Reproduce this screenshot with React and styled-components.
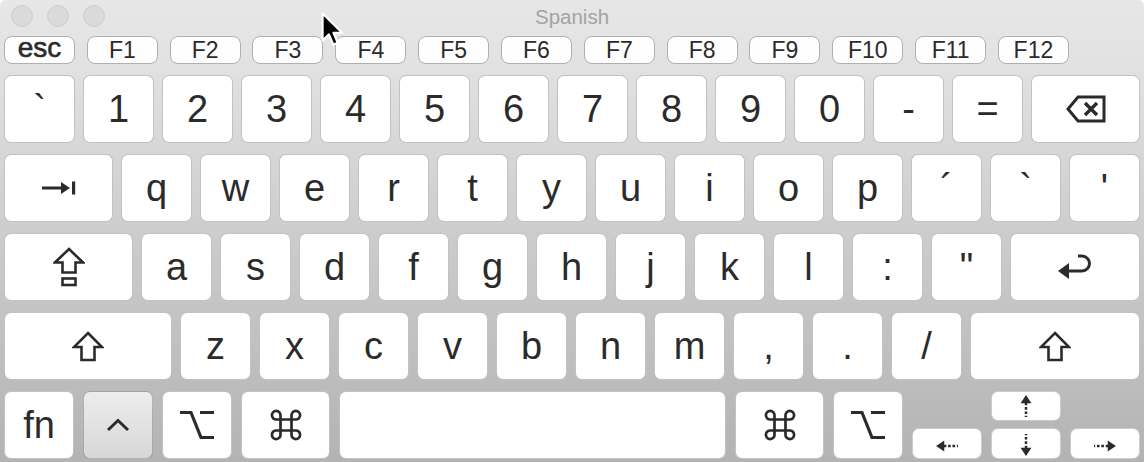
import React from 'react';
import styled, { createGlobalStyle } from 'styled-components';

const GlobalStyle = createGlobalStyle`
  html, body {
    margin: 0;
    padding: 0;
    background: #ffffff;
  }
  body {
    font-family: "Liberation Sans", Arial, sans-serif;
  }
`;

const ink = '#2b2b2b';

// 키보드 행 데이터
const numberRow = ['`', '1', '2', '3', '4', '5', '6', '7', '8', '9', '0', '-', '='];
const qwertyRow = ['q', 'w', 'e', 'r', 't', 'y', 'u', 'i', 'o', 'p', '´', '`', "'"];
const homeRow = ['a', 's', 'd', 'f', 'g', 'h', 'j', 'k', 'l', ':', '"'];
const bottomRow = ['z', 'x', 'c', 'v', 'b', 'n', 'm', ',', '.', '/'];
const fnKeys = ['F1', 'F2', 'F3', 'F4', 'F5', 'F6', 'F7', 'F8', 'F9', 'F10', 'F11', 'F12'];

const TabIcon = () => (
  <svg width="34" height="16" viewBox="0 0 34 16">
    <path d="M0 8 H21" stroke={ink} strokeWidth="3.2" />
    <polygon points="19,2 28,8 19,14" fill={ink} />
    <rect x="30" y="1.5" width="3.2" height="13" fill={ink} />
  </svg>
);

const DeleteIcon = () => (
  <svg width="40" height="28" viewBox="0 0 40 28">
    <path d="M12 2 H38 V26 H12 L2 14 Z" fill="none" stroke={ink} strokeWidth="3" strokeLinejoin="miter" />
    <path d="M19 8 L31 20 M31 8 L19 20" stroke={ink} strokeWidth="3.4" />
  </svg>
);

const CapsIcon = () => (
  <svg width="32" height="40" viewBox="0 0 32 40">
    <path d="M16 2 L30 15.5 H22.5 V25.5 H9.5 V15.5 H2 Z" fill="none" stroke={ink} strokeWidth="2.6" strokeLinejoin="miter" />
    <rect x="9.5" y="31.5" width="13" height="6.5" fill="none" stroke={ink} strokeWidth="2.6" />
  </svg>
);

const ShiftIcon = () => (
  <svg width="32" height="31" viewBox="0 0 32 31">
    <path d="M16 2 L30 16 H22.5 V29 H9.5 V16 H2 Z" fill="none" stroke={ink} strokeWidth="2.6" strokeLinejoin="miter" />
  </svg>
);

const ReturnIcon = () => (
  <svg width="34" height="26" viewBox="0 0 34 26">
    <polygon points="0,17 11,9 11,25" fill={ink} />
    <path d="M10 17 H24 A7.5 7.5 0 0 0 24 2 H20" fill="none" stroke={ink} strokeWidth="3" />
  </svg>
);

const CtrlIcon = () => (
  <svg width="24" height="14" viewBox="0 0 24 14">
    <path d="M2 12 L12 2.5 L22 12" fill="none" stroke={ink} strokeWidth="3" />
  </svg>
);

const OptionIcon = () => (
  <svg width="34" height="30" viewBox="0 0 34 30">
    <path d="M0 2.5 H11 L21 27.5 H34 M20 2.5 H34" fill="none" stroke={ink} strokeWidth="3.2" />
  </svg>
);

const CmdIcon = () => (
  <svg width="32" height="32" viewBox="0 0 32 32">
    <path
      d="M10.5 6.5 A4.3 4.3 0 1 0 6.5 10.5 H25.5 A4.3 4.3 0 1 0 21.5 6.5 V25.5 A4.3 4.3 0 1 0 25.5 21.5 H6.5 A4.3 4.3 0 1 0 10.5 25.5 Z"
      fill="none"
      stroke={ink}
      strokeWidth="2.7"
    />
  </svg>
);

const ArrowSvg = styled.svg`
  transform: rotate(${p => p.$deg}deg);
`;

const ArrowIcon = ({ dir }) => {
  const deg = { left: 0, up: 90, right: 180, down: 270 }[dir];
  return (
    <ArrowSvg $deg={deg} width="22" height="12" viewBox="0 0 20 11">
      <polygon points="0,5.5 7.5,0.5 7.5,10.5" fill={ink} />
      <path d="M7 5.5 H20" stroke={ink} strokeWidth="2.3" strokeDasharray="2.4 1.6" />
    </ArrowSvg>
  );
};

const Window = styled.div`
  position: relative;
  width: 1144px;
  height: 462px;
  overflow: hidden;
  border-radius: 6px 6px 0 0;
  background: linear-gradient(#e7e7e7 0px, #e2e2e2 60px, #cdcdcd 230px, #b3b3b3 462px);
  display: flex;
  flex-direction: column;
`;

const TitleBar = styled.div`
  height: 36px;
  display: grid;
  grid-template-columns: 1fr auto 1fr;
  align-items: start;
`;

const Lights = styled.div`
  display: flex;
  gap: 14px;
  padding: 5px 0 0 11px;
`;

const Light = styled.span`
  width: 22px;
  height: 22px;
  box-sizing: border-box;
  border-radius: 50%;
  background: #dadada;
  border: 1px solid #cdcdcd;
`;

const Title = styled.div`
  font-size: 20.5px;
  color: #a3a3a3;
  padding-top: 5px;
`;

const FnRow = styled.div`
  height: 28px;
  display: flex;
  justify-content: space-between;
  padding: 0 75px 0 4px;
`;

const FnKey = styled.div`
  width: 71px;
  height: 28px;
  box-sizing: border-box;
  border: 1.7px solid #b0b0b0;
  border-radius: 8px;
  background: #fefefe;
  display: flex;
  align-items: center;
  justify-content: center;
  font-size: ${p => (p.$esc ? '28px' : '23px')};
  line-height: 1;
  color: ${ink};
  -webkit-text-stroke: ${p => (p.$esc ? '0.6px' : '0')} ${ink};
  padding-bottom: ${p => (p.$esc ? '4px' : '0')};
`;

const KeyArea = styled.div`
  display: flex;
  flex-direction: column;
  gap: 11px;
  padding: 11px 4px 0;
`;

const Row = styled.div`
  display: flex;
  gap: ${p => p.$gap || 8}px;
  height: 68px;
`;

const Key = styled.div`
  width: ${p => (p.$w ? `${p.$w}px` : 'auto')};
  flex: ${p => (p.$grow ? 1 : 'none')};
  height: 68px;
  box-sizing: border-box;
  border: 1.5px solid rgba(0, 0, 0, 0.24);
  border-radius: 7px;
  background: ${p => (p.$active ? 'linear-gradient(#ededed, #d7d7d7)' : '#ffffff')};
  display: flex;
  align-items: center;
  justify-content: center;
  font-size: 38px;
  line-height: 1;
  color: ${ink};
`;

const Cluster = styled.div`
  display: grid;
  grid-template-columns: repeat(3, 70px);
  grid-template-rows: 30px 31px;
  column-gap: 9px;
  row-gap: 7px;
`;

const HalfKey = styled.div`
  grid-column: ${p => p.$col};
  grid-row: ${p => p.$row};
  box-sizing: border-box;
  border: 1.5px solid rgba(0, 0, 0, 0.2);
  border-radius: 7px;
  background: #ffffff;
  display: flex;
  align-items: center;
  justify-content: center;
  padding-top: ${p => p.$nudge || 0}px;
`;

const Cursor = styled.svg`
  position: absolute;
  left: 320px;
  top: 11px;
`;

const App = () => {
  return (
    <>
      <GlobalStyle />
      <Window>
        <TitleBar>
          <Lights>
            <Light />
            <Light />
            <Light />
          </Lights>
          <Title>Spanish</Title>
          <div />
        </TitleBar>

        <FnRow>
          <FnKey $esc>esc</FnKey>
          {fnKeys.map(k => (
            <FnKey key={k}>{k}</FnKey>
          ))}
        </FnRow>

        <KeyArea>
          <Row>
            {numberRow.map((k, i) => (
              <Key key={i} $w={71}>{k}</Key>
            ))}
            <Key $grow><DeleteIcon /></Key>
          </Row>

          <Row>
            <Key $grow><TabIcon /></Key>
            {qwertyRow.map((k, i) => (
              <Key key={i} $w={71}>{k}</Key>
            ))}
          </Row>

          <Row>
            <Key $w={129}><CapsIcon /></Key>
            {homeRow.map((k, i) => (
              <Key key={i} $w={71}>{k}</Key>
            ))}
            <Key $grow><ReturnIcon /></Key>
          </Row>

          <Row>
            <Key $w={168}><ShiftIcon /></Key>
            {bottomRow.map((k, i) => (
              <Key key={i} $w={71}>{k}</Key>
            ))}
            <Key $grow><ShiftIcon /></Key>
          </Row>

          <Row $gap={9}>
            <Key $w={70}>fn</Key>
            <Key $w={70} $active><CtrlIcon /></Key>
            <Key $w={70}><OptionIcon /></Key>
            <Key $w={89}><CmdIcon /></Key>
            <Key $grow />
            <Key $w={89}><CmdIcon /></Key>
            <Key $w={70}><OptionIcon /></Key>
            <Cluster>
              <HalfKey $col={2} $row={1}><ArrowIcon dir="up" /></HalfKey>
              <HalfKey $col={1} $row={2} $nudge={5}><ArrowIcon dir="left" /></HalfKey>
              <HalfKey $col={2} $row={2} $nudge={3}><ArrowIcon dir="down" /></HalfKey>
              <HalfKey $col={3} $row={2} $nudge={5}><ArrowIcon dir="right" /></HalfKey>
            </Cluster>
          </Row>
        </KeyArea>

        <Cursor width="26" height="38" viewBox="-1.6 -1.6 16 23.4">
          <path
            d="M0 0 V16.5 L3.9 12.8 L6.6 19.2 L9.3 18 L6.7 11.8 H12 Z"
            fill="#000000"
            stroke="#ffffff"
            strokeWidth="1.3"
            strokeLinejoin="round"
          />
        </Cursor>
      </Window>
    </>
  );
};

export default App;
